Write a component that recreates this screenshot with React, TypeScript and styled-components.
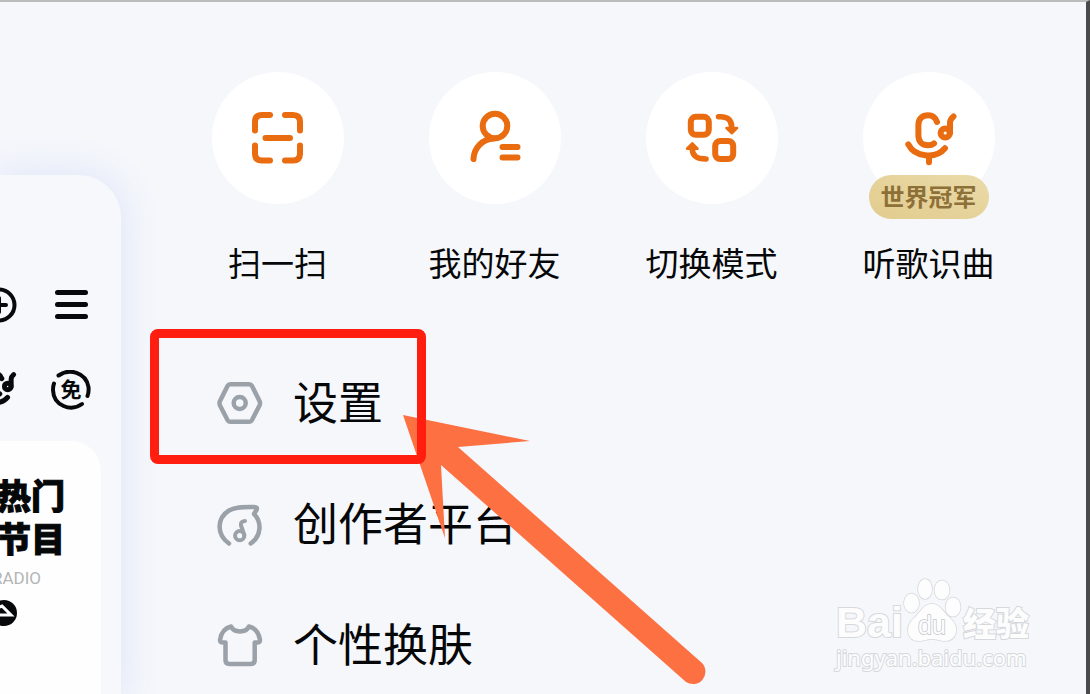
import React from "react";
import styled, { createGlobalStyle } from "styled-components";

const Global = createGlobalStyle`
  * { box-sizing: border-box; }
  body { margin: 0; background: #f5f7fb; }
  button { border: 0; padding: 0; background: none; font: inherit; color: inherit; cursor: pointer; }
`;

const Screen = styled.div`
  position: relative;
  display: flex;
  min-height: 100vh;
  overflow: hidden;
  border-top: 2px solid #bcbcbc;
  border-right: 4px solid #4a4a4a;
  background: #f5f7fb;
  color: #060708;
  font-family: "Noto Sans CJK SC", sans-serif;
`;

const HomePanel = styled.aside`
  flex: none;
  display: flex;
  flex-direction: column;
  width: 121px;
  margin-top: 173px;
  padding-top: 110px;
  border-radius: 0 42px 0 0;
  background: #f6f8fb;
  box-shadow: 0 0 36px 6px #e2e8f8;
`;

const ToolRow = styled.div`
  display: flex;
  justify-content: flex-end;
  gap: 32px;
  height: 40px;
  padding-right: 30px;
  margin-bottom: 45px;

  button { flex: none; width: 40px; height: 40px; }
  svg { display: block; }
  & + & { margin-bottom: 31px; }
`;

const RadioCard = styled.section`
  flex: 1;
  display: flex;
  flex-direction: column;
  align-items: flex-end;
  width: 101px;
  padding: 32px 36px 0 0;
  border-radius: 0 30px 0 0;
  background: #fefefe;
`;

const CardTitle = styled.h2`
  width: 68px;
  margin: 0;
  font-size: 34px;
  font-weight: 900;
  line-height: 43px;
  -webkit-text-stroke: 1px #060708;
`;

const CardNote = styled.span`
  margin: 7px 24px 10px 0;
  color: #b4b5b6;
  font-family: Roboto, sans-serif;
  font-size: 17px;
  line-height: 24px;
`;

const CardBadge = styled.svg`
  flex: none;
  margin-right: 48px;
`;

const Drawer = styled.main`
  flex: 1;
  min-width: 0;
  padding: 70px 49px 0 48px;
`;

const Shortcuts = styled.nav`
  display: grid;
  grid-template-columns: repeat(4, 1fr);
`;

const Shortcut = styled.button`
  display: flex;
  flex-direction: column;
  align-items: center;
  gap: 34px;
  font-size: 33px;
  line-height: 48px;
  white-space: nowrap;
`;

const Disc = styled.span`
  position: relative;
  display: flex;
  align-items: center;
  justify-content: center;
  width: 132px;
  height: 132px;
  border-radius: 50%;
  background: #fff;
`;

const Badge = styled.span`
  position: absolute;
  left: 6px;
  bottom: -15px;
  width: 120px;
  height: 44px;
  border-radius: 22px;
  background: linear-gradient(20deg, #e2cb8d, #eadba9);
  color: #8d7037;
  font-size: 24px;
  font-weight: 700;
  line-height: 42px;
  text-align: center;
`;

const Menu = styled.nav`
  display: flex;
  flex-direction: column;
  align-items: flex-start;
  gap: 33px;
  margin-top: 74px;
  padding-left: 47px;
`;

const MenuItem = styled.button`
  position: relative;
  display: flex;
  align-items: center;
  gap: 29px;
  height: 88px;
  font-size: 45px;
  line-height: 66px;
  white-space: nowrap;
`;

const MenuLabel = styled.span`
  padding-bottom: 6px;
`;

const Highlight = styled.span`
  position: absolute;
  z-index: 2;
  top: -31px;
  left: -66px;
  width: 276px;
  height: 135px;
  border: 9px solid #ff1e10;
  border-radius: 8px;
`;

const Pointer = styled.svg`
  position: absolute;
  z-index: 1;
  top: 413px;
  left: 403px;
  pointer-events: none;
`;

const Watermark = styled.div`
  position: absolute;
  right: 56px;
  bottom: 22px;
  width: 194px;
  color: #fdfdfe;
  -webkit-text-stroke: 2px #d6d8db;
  paint-order: stroke fill;
`;

const Brand = styled.div`
  display: flex;
  align-items: flex-end;
  font-size: 33px;
  font-weight: 900;
  line-height: 40px;

  b { font-family: "Liberation Sans", sans-serif; font-size: 43px; }
  svg { flex: none; }
`;

const Site = styled.div`
  font-family: "Noto Sans", sans-serif;
  font-size: 22px;
  line-height: 30px;
`;

type IconProps = { size?: number; children: React.ReactNode; width?: number; color: string; box: number };

const Icon = ({ size, box, width = 6, color, children }: IconProps) => (
  <svg width={size ?? box} height={size ?? box} viewBox={`0 0 ${box} ${box}`} fill="none" stroke={color}
    strokeWidth={width} strokeLinecap="round" strokeLinejoin="round" aria-hidden="true">
    {children}
  </svg>
);

const ORANGE = "#e96c10";
const GREY = "#9ba1a8";
const INK = "#08090a";

const micShape = (
  <>
    <path d="M36 12C34.5 7.5 31.5 5.3 27.2 5.3C21 5.3 17.4 9 17.4 15V25.500C17.400 31.500 21 35.300 27 35.300C29.500 35.300 31.500 34.800 33 33.500" />
    <circle cx="44.200" cy="23" r="4.600" />
    <path d="M49 23V12.500Q49 9.500 52.500 6.500" />
    <path d="M7.300 34.300C13.500 46.500 34 50 44 38.300M28 46V52.300" />
  </>
);

const shortcuts = [
  {
    label: "扫一扫",
    icon: <path d="M5 20.500V12Q5 5 12 5H20M35 5H43Q50 5 50 12V20.500M50 35.500V43.500Q50 50.500 43 50.500H35M20 50.500H12Q5 50.500 5 43.500V35.500M15.500 28H40" />,
  },
  {
    label: "我的好友",
    icon: (
      <>
        <circle cx="28" cy="16" r="12.300" />
        <path d="M27 28.500C15 29 7 38 6.500 49M35.500 37H50.500M35.500 47.500H50.500" />
      </>
    ),
  },
  {
    label: "切换模式",
    icon: (
      <>
        <rect x="6.800" y="6.800" width="18" height="18" rx="5" />
        <rect x="31.200" y="31" width="18" height="18" rx="5" />
        <path d="M34.500 6.800C43 6 47.500 9.500 47.700 17M8.300 39C8.500 46.500 13 49 22 49" strokeWidth="5.600" />
        <path d="M42.500 18H53L47.700 23.200ZM3 38.700H13.500L8.300 33.500Z" fill={ORANGE} strokeWidth="2.600" />
      </>
    ),
  },
  { label: "听歌识曲", icon: micShape, badge: "世界冠军" },
];

const menu = [
  {
    label: "设置",
    active: true,
    icon: (
      <>
        <path d="M14.500 4.300H33Q35 4.300 36 6L43.500 21Q44.500 23.300 43.500 25.500L36 40Q35 41.800 33 41.800H14.500Q12.500 41.800 11.500 40L4 25.500Q3 23.300 4 21L11.500 6Q12.500 4.300 14.500 4.300Z" />
        <circle cx="23.700" cy="23" r="6" />
      </>
    ),
  },
  {
    label: "创作者平台",
    icon: (
      <>
        <path d="M13 42.500C0 33 1 17 13 9.500C20 5.500 28 6 38 6Q42 6 40.500 9L38 13C46 21 45.500 35 34.700 42.500" />
        <circle cx="23.700" cy="34.700" r="4.600" strokeWidth="4" />
        <path d="M28.300 34L25 24.500Q24 20.500 29 20" strokeWidth="4" />
      </>
    ),
  },
  {
    label: "个性换肤",
    icon: (
      <path d="M15 4.500C18 11 30 11 33 4.500C39 6 43 11 44 18Q44 20.500 41 20.500H38.700V38Q38.700 42 34.500 42H13.500Q9.500 42 9.500 38V20.500H7Q4 20.500 4 18C5 11 9 6 15 4.500Z" />
    ),
  },
];

export default function App() {
  return (
    <>
      <Global />
      <Screen>
        <HomePanel>
          <ToolRow>
            <button aria-label="添加">
              <Icon box={40} width={4} color={INK}>
                <circle cx="20" cy="20" r="15.500" />
                <path d="M13 20H27M20 13V27" />
              </Icon>
            </button>
            <button aria-label="菜单">
              <Icon box={40} width={5} color={INK}>
                <path d="M6.500 7.500H34.500M6.500 19.500H34.500M6.500 31.500H34.500" />
              </Icon>
            </button>
          </ToolRow>
          <ToolRow>
            <button aria-label="听歌识曲">
              <Icon box={56} size={40} width={7} color={INK}>
                <g transform="translate(-4 0)">{micShape}</g>
              </Icon>
            </button>
            <button aria-label="免费">
              <Icon box={40} width={4} color={INK}>
                <path d="M7.500 5.500C18 -2 35 2 37.500 17Q38 22 36.500 26M31 34C20 42 2.500 36 2 20Q2 16 3 13.500" />
                <text x="20" y="27" textAnchor="middle" fontSize="21" fontWeight="700" fill={INK} stroke="none">免</text>
              </Icon>
            </button>
          </ToolRow>
          <RadioCard>
            <CardTitle>热门节目</CardTitle>
            <CardNote>RADIO</CardNote>
            <CardBadge width="26" height="26" viewBox="0 0 26 26" aria-hidden="true">
              <circle cx="13" cy="13" r="13" fill={INK} />
              <path d="M4 9L11 6L20 15H6" fill="none" stroke="#fff" strokeWidth="3" />
            </CardBadge>
          </RadioCard>
        </HomePanel>

        <Drawer>
          <Shortcuts>
            {shortcuts.map(({ label, icon, badge }) => (
              <Shortcut key={label}>
                <Disc>
                  <Icon box={56} color={ORANGE}>{icon}</Icon>
                  {badge && <Badge>{badge}</Badge>}
                </Disc>
                <span>{label}</span>
              </Shortcut>
            ))}
          </Shortcuts>
          <Menu>
            {menu.map(({ label, icon, active }) => (
              <MenuItem key={label}>
                <Icon box={48} width={4.5} color={GREY}>{icon}</Icon>
                <MenuLabel>{label}</MenuLabel>
                {active && <Highlight />}
              </MenuItem>
            ))}
          </Menu>
        </Drawer>

        <Pointer width="306" height="272" viewBox="0 0 306 272" aria-hidden="true">
          <path d="M0 0L127 26L55 32L299 248A12.500 12.500 0 0 1 283 267L38 50L42 123Z" fill="#fd7042" />
        </Pointer>

        <Watermark>
          <Brand>
            <b>Bai</b>
            <svg width="60" height="64" viewBox="0 0 60 64" fill="#fdfdfe" stroke="#d6d8db" strokeWidth="1.500">
              <ellipse cx="8.500" cy="25" rx="7.500" ry="9.500" />
              <ellipse cx="22" cy="11" rx="7" ry="10" />
              <ellipse cx="39" cy="12" rx="7.500" ry="9.500" />
              <ellipse cx="50" cy="29" rx="7.500" ry="9.500" />
              <path d="M29 26C37 26 40 34 47 40C58 50 53 63 42 63C37 63 34 61 29 61C24 61 21 63 16 63C4 63 1 49 11 40C18 34 20 26 29 26Z" />
              <text x="29" y="56" textAnchor="middle" fontSize="25" fontWeight="400" stroke="#c4c6ca" fontFamily="Liberation Sans, sans-serif">du</text>
            </svg>
            <span>经验</span>
          </Brand>
          <Site>jingyan.baidu.com</Site>
        </Watermark>
      </Screen>
    </>
  );
}
